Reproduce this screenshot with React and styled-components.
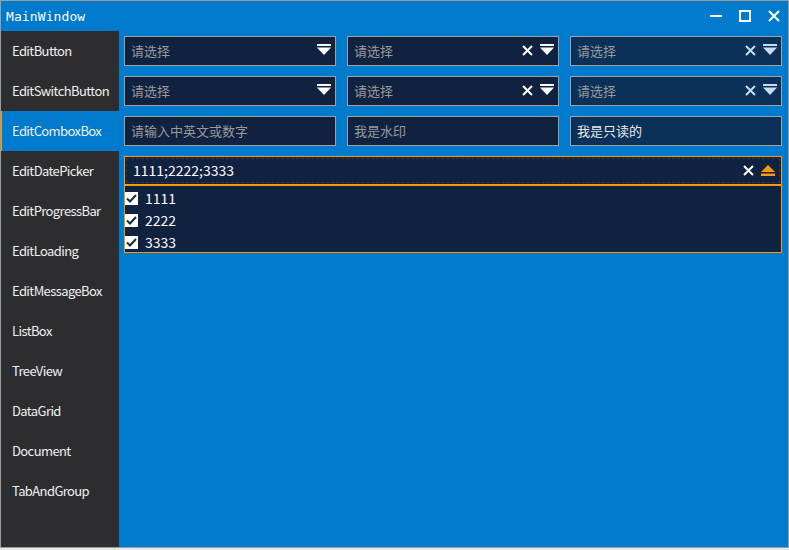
import React from 'react';
import styled, { createGlobalStyle } from 'styled-components';

const GlobalStyle = createGlobalStyle`
    html, body {
        margin: 0;
        padding: 0;
        background: #eeeeee;
        overflow: hidden;
    }
`;

const FONT = `"Noto Sans CJK SC", "Noto Sans", sans-serif`;

const Window = styled.div`
    width: 787px;
    height: 546px;
    border: 1px solid #9c9c9c;
    display: flex;
    flex-direction: column;
    background: #007acc;
    font-family: ${FONT};
`;

const TitleBar = styled.div`
    height: 30px;
    display: flex;
    align-items: center;
    padding-left: 5px;
    color: #ffffff;
`;

const Title = styled.div`
    flex: 1;
    font-family: "DejaVu Sans Mono", "Liberation Mono", monospace;
    font-size: 13px;
    letter-spacing: 0.1px;
`;

const WinButton = styled.div`
    width: 29px;
    height: 30px;
    display: flex;
    align-items: center;
    justify-content: center;
`;

const Body = styled.div`
    flex: 1;
    display: flex;
    min-height: 0;
`;

const Sidebar = styled.div`
    width: 118px;
    background: #2d2d30;
    display: flex;
    flex-direction: column;
`;

const NavItem = styled.div`
    height: 40px;
    display: flex;
    align-items: center;
    padding: 0 0 2px 10px;
    box-sizing: border-box;
    font-size: 13px;
    letter-spacing: -0.6px;
    color: #f0f0f0;
    background: ${p => (p.$active ? '#007acc' : 'transparent')};
    border-left: 1px solid ${p => (p.$active ? '#f29a1f' : 'transparent')};
`;

const Content = styled.div`
    flex: 1;
    padding: 5px 6px 0 5px;
    display: flex;
    flex-direction: column;
`;

const Grid = styled.div`
    display: grid;
    grid-template-columns: repeat(3, 1fr);
    gap: 10px 11px;
`;

const Field = styled.div`
    height: 30px;
    box-sizing: border-box;
    border: 1px solid #a0a0a0;
    background: ${p => (p.$disabled ? '#0c3158' : '#10223f')};
    display: flex;
    align-items: center;
    padding: 0 4px 2px 6px;
    font-size: 13px;
    color: ${p => (p.$value ? '#e8e8e8' : '#9a9a9a')};
`;

const FieldText = styled.span`
    flex: 1;
`;

const IconGroup = styled.div`
    display: flex;
    align-items: center;
    gap: 7px;
`;

const MultiBox = styled.div`
    margin-top: 10px;
    height: 30px;
    box-sizing: border-box;
    border: 1px solid #ff9a00;
    border-bottom-width: 2px;
    background: #10223f;
    padding: 1px;
`;

const FocusRect = styled.div`
    height: 100%;
    box-sizing: border-box;
    border: 1px dashed #2b3a52;
    display: flex;
    align-items: center;
    padding: 0 4px 1px 6px;
    font-size: 14px;
    color: #ffffff;
`;

const Popup = styled.div`
    height: 67px;
    box-sizing: border-box;
    border: 1px solid #ff9a00;
    border-top: none;
    background: #10223f;
    padding-top: 1px;
`;

const Option = styled.div`
    height: 22px;
    display: flex;
    align-items: center;
    gap: 7px;
    font-size: 14px;
    color: #ffffff;
`;

const Check = styled.div`
    width: 13px;
    height: 13px;
    background: #ffffff;
    display: flex;
    align-items: center;
    justify-content: center;
`;

const Footer = styled.div`
    height: 2px;
    background: #e8e8e8;
`;

const ClearIcon = ({ color = '#ffffff' }) => (
    <svg width="11" height="11" viewBox="0 0 11 11">
        <path d="M1 1 L10 10 M10 1 L1 10" stroke={color} strokeWidth="2" />
    </svg>
);

const DownIcon = ({ color = '#ffffff' }) => (
    <svg width="14" height="12" viewBox="0 0 14 12">
        <rect x="0" y="0" width="14" height="2" fill={color} />
        <path d="M0 3.5 L14 3.5 L7 11 Z" fill={color} />
    </svg>
);

const UpIcon = () => (
    <svg width="14" height="11" viewBox="0 0 14 11">
        <path d="M7 0 L14 7 L0 7 Z" fill="#ff9a00" />
        <rect x="0" y="8.5" width="14" height="2.5" fill="#ff9a00" />
    </svg>
);

const navItems = [
    'EditButton', 'EditSwitchButton', 'EditComboxBox', 'EditDatePicker',
    'EditProgressBar', 'EditLoading', 'EditMessageBox', 'ListBox',
    'TreeView', 'DataGrid', 'Document', 'TabAndGroup',
];

const fields = [
    { text: '请选择', icons: ['down'] },
    { text: '请选择', icons: ['clear', 'down'] },
    { text: '请选择', icons: ['clear', 'down'], disabled: true },
    { text: '请选择', icons: ['down'] },
    { text: '请选择', icons: ['clear', 'down'] },
    { text: '请选择', icons: ['clear', 'down'], disabled: true },
    { text: '请输入中英文或数字', icons: [] },
    { text: '我是水印', icons: [] },
    { text: '我是只读的', icons: [], disabled: true, value: true },
];

const CheckMark = () => (
    <svg width="11" height="9" viewBox="0 0 11 9">
        <path d="M1 4.5 L4 7.5 L10 1" stroke="#1a2a44" strokeWidth="2" fill="none" />
    </svg>
);

export default function App() {
    return (
        <>
            <GlobalStyle />
            <Window>
                <TitleBar>
                    <Title>MainWindow</Title>
                    <WinButton>
                        <svg width="12" height="12" viewBox="0 0 12 12">
                            <rect x="0" y="5" width="12" height="2" fill="#fff" />
                        </svg>
                    </WinButton>
                    <WinButton>
                        <svg width="12" height="12" viewBox="0 0 12 12">
                            <rect x="1" y="1" width="10" height="10" fill="none" stroke="#fff" strokeWidth="2" />
                        </svg>
                    </WinButton>
                    <WinButton>
                        <svg width="12" height="12" viewBox="0 0 12 12">
                            <path d="M1 1 L11 11 M11 1 L1 11" stroke="#fff" strokeWidth="2" />
                        </svg>
                    </WinButton>
                </TitleBar>
                <Body>
                    <Sidebar>
                        {navItems.map(n => (
                            <NavItem key={n} $active={n === 'EditComboxBox'}>{n}</NavItem>
                        ))}
                    </Sidebar>
                    <Content>
                        <Grid>
                            {fields.map((f, i) => {
                                const c = f.disabled ? '#c6dcf2' : '#ffffff';
                                return (
                                    <Field key={i} $disabled={f.disabled} $value={f.value}>
                                        <FieldText>{f.text}</FieldText>
                                        <IconGroup>
                                            {f.icons.map(ic =>
                                                ic === 'clear'
                                                    ? <ClearIcon key={ic} color={c} />
                                                    : <DownIcon key={ic} color={c} />
                                            )}
                                        </IconGroup>
                                    </Field>
                                );
                            })}
                        </Grid>
                        <MultiBox>
                            <FocusRect>
                                <FieldText>1111;2222;3333</FieldText>
                                <IconGroup>
                                    <ClearIcon />
                                    <UpIcon />
                                </IconGroup>
                            </FocusRect>
                        </MultiBox>
                        <Popup>
                            {['1111', '2222', '3333'].map(o => (
                                <Option key={o}>
                                    <Check><CheckMark /></Check>
                                    {o}
                                </Option>
                            ))}
                        </Popup>
                    </Content>
                </Body>
            </Window>
            <Footer />
        </>
    );
}
